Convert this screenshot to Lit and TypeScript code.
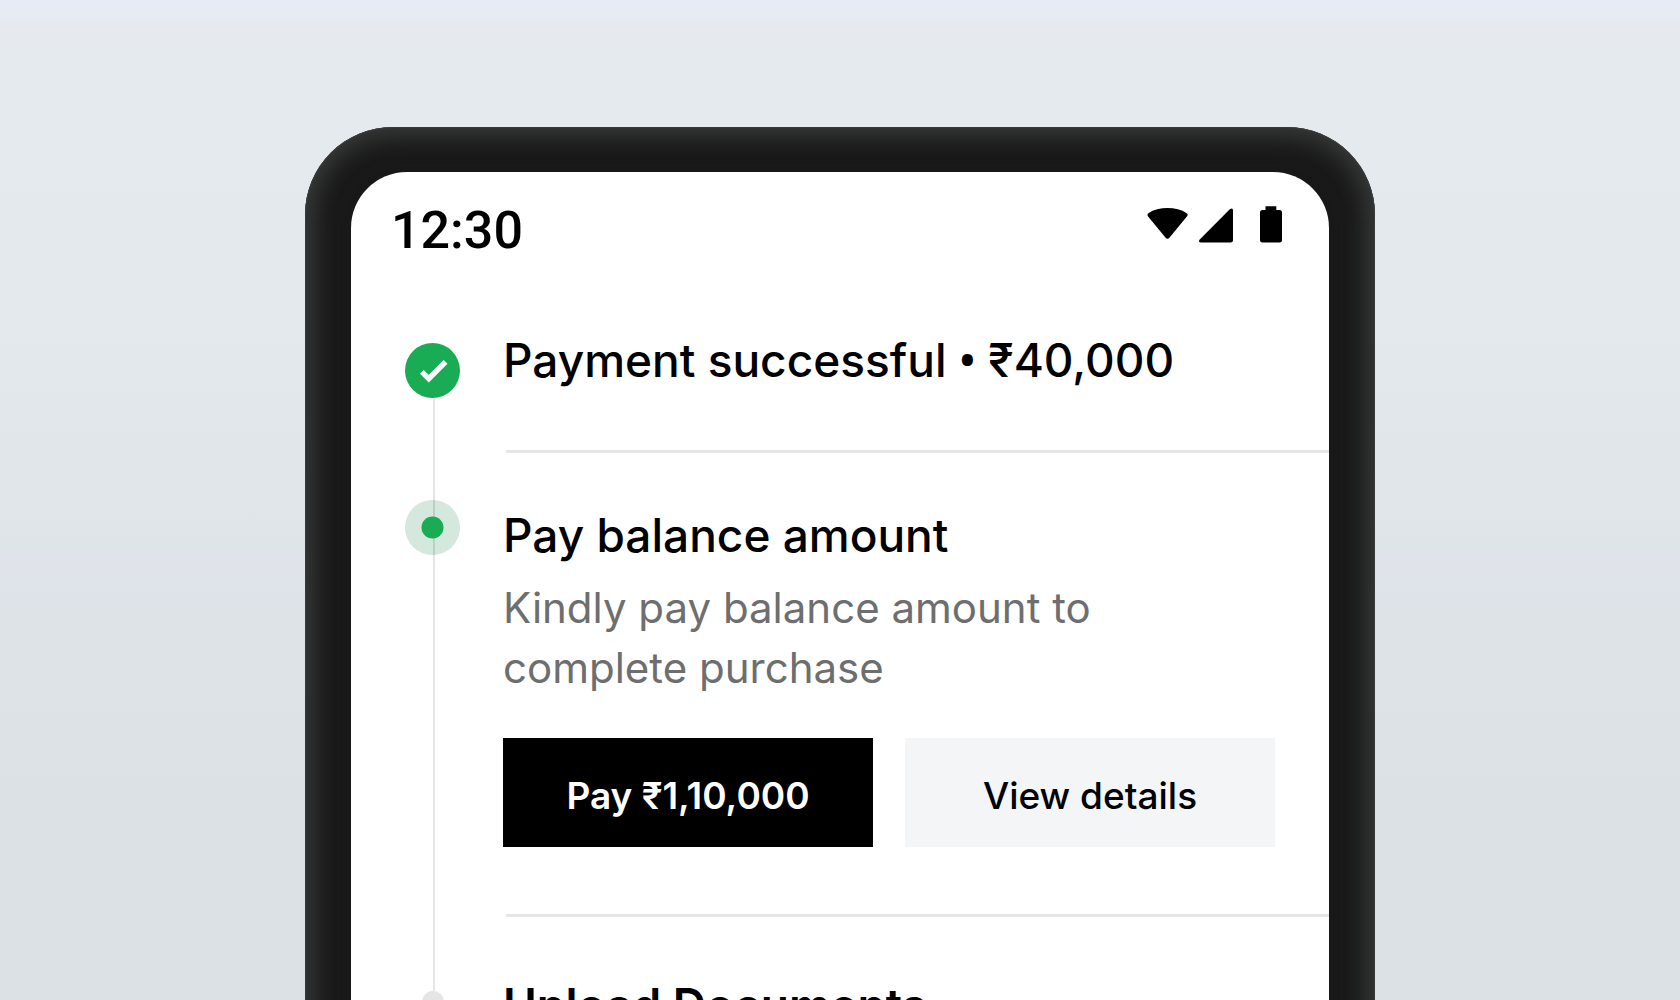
import { LitElement, html, css, svg, nothing } from "lit";
import { customElement, property } from "lit/decorators.js";

type StepState = "done" | "current" | "upcoming";

interface Step {
  state: StepState;
  title: string;
  amount?: string;
  detail?: string;
  primary?: string;
  secondary?: string;
}

const steps: Step[] = [
  { state: "done", title: "Payment successful", amount: "₹40,000" },
  {
    state: "current",
    title: "Pay balance amount",
    detail: "Kindly pay balance amount to complete purchase",
    primary: "Pay ₹1,10,000",
    secondary: "View details",
  },
  { state: "upcoming", title: "Upload Documents" },
];

@customElement("status-bar")
export class StatusBar extends LitElement {
  static styles = css`
    :host {
      display: flex;
      justify-content: space-between;
      align-items: flex-start;
      padding: 33px 46px 75px 40px;
      color: #000;
    }
    .time {
      font: 500 52px/52px Roboto, "Liberation Sans", sans-serif;
    }
    .icons {
      display: block;
      margin-top: 1px;
    }
  `;

  render() {
    return html`
      <time class="time">12:30</time>
      <svg class="icons" width="136" height="37" viewBox="0 0 136 37" role="img" aria-label="Wi-Fi, signal, battery">
        <path d="M1.4 7.2C6.6 3.6 13.500 2 20.500 2s14 1.600 19.200 5.200q1.600 1.200 .4 3L22.600 31.600q-2.100 2.400-4.200 0L.9 10.200q-1-1.800.5-3z" />
        <path d="M82.800 3.300q3.200-2 3.200 1V34q0 2.500-2.500 2.500H54q-3-.3-1.500-2.700z" />
        <path d="M118.500 .3h10.800V4h3.200q2.500 0 2.500 2.500V34q0 2.500-2.500 2.500h-17Q113 36.500 113 34V6.500q0-2.500 2.500-2.500h3z" />
      </svg>
    `;
  }
}

@customElement("step-marker")
export class StepMarker extends LitElement {
  @property() state: StepState = "upcoming";

  static styles = css`
    :host {
      display: flex;
      flex-direction: column;
      align-items: flex-start;
      width: 55px;
    }
    .line {
      width: 2px;
      margin-left: 28px;
      background: #e5e5e5;
    }
    .lead-done { height: 11px; background: none; }
    .lead-current { height: 47px; }
    .lead-upcoming { height: 74px; }
    .rest { flex: 1; }
    svg { display: block; flex: none; }
    .small { margin-left: 17px; }
  `;

  private icon() {
    switch (this.state) {
      case "done":
        return html`<svg width="55" height="55" viewBox="0 0 55 55" aria-hidden="true">
          <circle cx="27.5" cy="27.5" r="27.5" fill="#1aac54" />
          <path d="M16.800 28.900l7 6.800L40.600 18.900" fill="none" stroke="#fff" stroke-width="5.400" />
        </svg>`;
      case "current":
        return html`<svg width="55" height="55" viewBox="0 0 55 55" aria-hidden="true">
          <circle cx="27.5" cy="27.5" r="27.5" fill="#d4e8dd" />
          ${svg`<path d="M29 0v55" stroke="#bccfc4" stroke-width="2" />`}
          <circle cx="27.5" cy="27.5" r="11" fill="#1aac54" />
        </svg>`;
      default:
        return html`<svg class="small" width="22" height="22" viewBox="0 0 22 22" aria-hidden="true">
          <circle cx="11" cy="11" r="11" fill="#e5e5e5" />
        </svg>`;
    }
  }

  render() {
    return html`
      <span class="line lead-${this.state}"></span>
      ${this.icon()}
      ${this.state === "upcoming" ? nothing : html`<span class="line rest"></span>`}
    `;
  }
}

@customElement("app-root")
export class AppRoot extends LitElement {
  static styles = css`
    :host {
      display: block;
      height: 100vh;
      overflow: hidden;
      background: linear-gradient(
        180deg,
        #e7ebf6 0%,
        #e7ebf3 1%,
        #e6eaef 3%,
        #e5eaee 15%,
        #e3e8ec 35%,
        #e0e5e9 52%,
        #dfe3ea 58%,
        #dee3e7 64%,
        #dce1e5 80%,
        #dce1e5 100%
      );
      font-family: Inter, "Noto Sans", sans-serif;
      color: #000;
    }
    .stage {
      padding: 127px 24px 0;
    }
    .phone {
      box-sizing: border-box;
      max-width: 1070px;
      margin: 0 auto;
      padding: 45px 46px 46px;
      border-radius: 88px;
      background: #191919;
      box-shadow:
        inset 0 0 2px #4a5050,
        inset 0 0 24px 4px #3c3f3f,
        inset 0 0 30px 12px #242424;
    }
    .screen {
      overflow: hidden;
      border-radius: 56px;
      background: #fff;
    }
    .steps {
      list-style: none;
      margin: 0;
      padding: 0 0 160px 54px;
    }
    .step {
      display: grid;
      grid-template-columns: auto 1fr;
      column-gap: 43px;
    }
    .current { --top: 54px; --bottom: 67px; }
    .upcoming { --top: 60px; }
    .body {
      display: flex;
      flex-direction: column;
      min-width: 0;
      padding-top: var(--top, 0);
    }
    .title {
      margin: 0;
      font-size: 46px;
      line-height: 56px;
      font-weight: 550;
    }
    .upcoming .title { font-weight: 600; }
    .dot { font-family: "Noto Sans", sans-serif; line-height: 1; }
    .detail {
      margin: 15px 54px 0 0;
      font-size: 42px;
      line-height: 60px;
      color: #6e6e6e;
    }
    .actions {
      display: flex;
      gap: 32px;
      margin: 40px 54px 0 0;
    }
    .button {
      flex: 1;
      height: 109px;
      padding: 7px 0 0;
      border: 0;
      font: 500 37px/44px Inter, "Noto Sans", sans-serif;
      color: #000;
      background: #f3f5f7;
      cursor: pointer;
    }
    .primary {
      color: #fff;
      background: #000;
      font-weight: 600;
    }
    .rule {
      width: auto;
      height: 3px;
      margin: var(--bottom, 62px) 0 0 3px;
      border: 0;
      background: #e5e5e5;
    }
  `;

  private renderStep(step: Step, last: boolean) {
    return html`
      <li class="step ${step.state}">
        <step-marker .state=${step.state}></step-marker>
        <div class="body">
          <h2 class="title">${step.title}${step.amount ? html` <span class="dot">•</span> ${step.amount}` : nothing}</h2>
          ${step.detail ? html`<p class="detail">${step.detail}</p>` : nothing}
          ${step.primary
            ? html`<div class="actions">
                <button class="button primary" type="button">${step.primary}</button>
                <button class="button" type="button">${step.secondary}</button>
              </div>`
            : nothing}
          ${last ? nothing : html`<hr class="rule" />`}
        </div>
      </li>
    `;
  }

  render() {
    return html`
      <main class="stage">
        <div class="phone">
          <div class="screen">
            <status-bar></status-bar>
            <ol class="steps">
              ${steps.map((s, i) => this.renderStep(s, i === steps.length - 1))}
            </ol>
          </div>
        </div>
      </main>
    `;
  }
}
